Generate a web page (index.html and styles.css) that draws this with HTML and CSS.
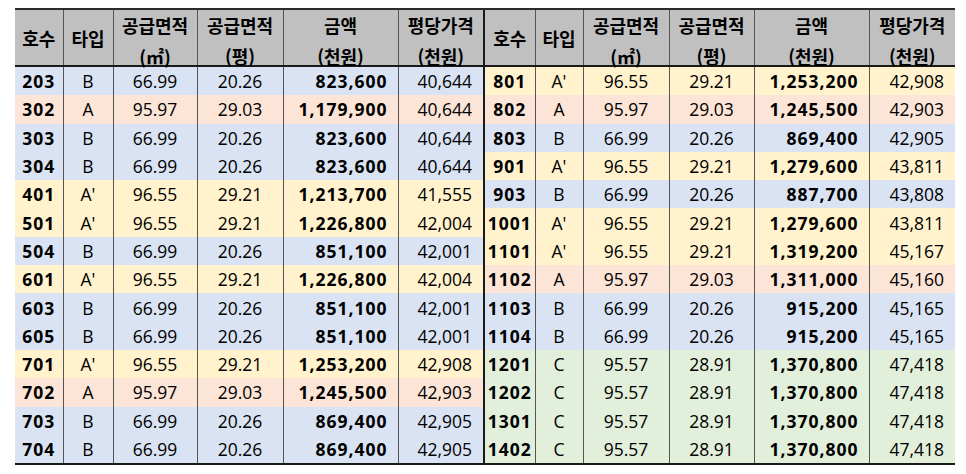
FILE: index.html
```html
<!DOCTYPE html>
<html lang="ko">
<head>
<meta charset="utf-8">
<title>분양가 표</title>
<link rel="stylesheet" href="styles.css">
</head>
<body>
<div class="sheet">
  <div class="half left">
    <table>
      <colgroup><col class="w48"><col class="w50"><col class="w84"><col class="w86"><col class="w115"><col class="w85"></colgroup>
      <thead><tr>
        <th><div class="hd one"><span>호수</span></div></th>
        <th><div class="hd one"><span>타입</span></div></th>
        <th><div class="hd"><span>공급면적</span><span>(㎡)</span></div></th>
        <th><div class="hd"><span>공급면적</span><span>(평)</span></div></th>
        <th><div class="hd"><span>금액</span><span>(천원)</span></div></th>
        <th><div class="hd"><span>평당가격</span><span>(천원)</span></div></th>
      </tr></thead>
      <tbody>
        <tr class="b"><td class="no">203</td><td>B</td><td>66.99</td><td>20.26</td><td class="amt">823,600</td><td class="pp">40,644</td></tr>
        <tr class="a"><td class="no">302</td><td>A</td><td>95.97</td><td>29.03</td><td class="amt">1,179,900</td><td class="pp">40,644</td></tr>
        <tr class="b"><td class="no">303</td><td>B</td><td>66.99</td><td>20.26</td><td class="amt">823,600</td><td class="pp">40,644</td></tr>
        <tr class="b"><td class="no">304</td><td>B</td><td>66.99</td><td>20.26</td><td class="amt">823,600</td><td class="pp">40,644</td></tr>
        <tr class="ap"><td class="no">401</td><td>A'</td><td>96.55</td><td>29.21</td><td class="amt">1,213,700</td><td class="pp">41,555</td></tr>
        <tr class="ap"><td class="no">501</td><td>A'</td><td>96.55</td><td>29.21</td><td class="amt">1,226,800</td><td class="pp">42,004</td></tr>
        <tr class="b"><td class="no">504</td><td>B</td><td>66.99</td><td>20.26</td><td class="amt">851,100</td><td class="pp">42,001</td></tr>
        <tr class="ap"><td class="no">601</td><td>A'</td><td>96.55</td><td>29.21</td><td class="amt">1,226,800</td><td class="pp">42,004</td></tr>
        <tr class="b"><td class="no">603</td><td>B</td><td>66.99</td><td>20.26</td><td class="amt">851,100</td><td class="pp">42,001</td></tr>
        <tr class="b"><td class="no">605</td><td>B</td><td>66.99</td><td>20.26</td><td class="amt">851,100</td><td class="pp">42,001</td></tr>
        <tr class="ap"><td class="no">701</td><td>A'</td><td>96.55</td><td>29.21</td><td class="amt">1,253,200</td><td class="pp">42,908</td></tr>
        <tr class="a"><td class="no">702</td><td>A</td><td>95.97</td><td>29.03</td><td class="amt">1,245,500</td><td class="pp">42,903</td></tr>
        <tr class="b"><td class="no">703</td><td>B</td><td>66.99</td><td>20.26</td><td class="amt">869,400</td><td class="pp">42,905</td></tr>
        <tr class="b"><td class="no">704</td><td>B</td><td>66.99</td><td>20.26</td><td class="amt">869,400</td><td class="pp">42,905</td></tr>
      </tbody>
    </table>
  </div>
  <div class="half right">
    <table>
      <colgroup><col class="w50"><col class="w48"><col class="w86"><col class="w85"><col class="w115"><col class="w86"></colgroup>
      <thead><tr>
        <th><div class="hd one"><span>호수</span></div></th>
        <th><div class="hd one"><span>타입</span></div></th>
        <th><div class="hd"><span>공급면적</span><span>(㎡)</span></div></th>
        <th><div class="hd"><span>공급면적</span><span>(평)</span></div></th>
        <th><div class="hd"><span>금액</span><span>(천원)</span></div></th>
        <th><div class="hd"><span>평당가격</span><span>(천원)</span></div></th>
      </tr></thead>
      <tbody>
        <tr class="ap"><td class="no">801</td><td>A'</td><td>96.55</td><td>29.21</td><td class="amt">1,253,200</td><td class="pp">42,908</td></tr>
        <tr class="a"><td class="no">802</td><td>A</td><td>95.97</td><td>29.03</td><td class="amt">1,245,500</td><td class="pp">42,903</td></tr>
        <tr class="b"><td class="no">803</td><td>B</td><td>66.99</td><td>20.26</td><td class="amt">869,400</td><td class="pp">42,905</td></tr>
        <tr class="ap"><td class="no">901</td><td>A'</td><td>96.55</td><td>29.21</td><td class="amt">1,279,600</td><td class="pp">43,811</td></tr>
        <tr class="b"><td class="no">903</td><td>B</td><td>66.99</td><td>20.26</td><td class="amt">887,700</td><td class="pp">43,808</td></tr>
        <tr class="ap"><td class="no">1001</td><td>A'</td><td>96.55</td><td>29.21</td><td class="amt">1,279,600</td><td class="pp">43,811</td></tr>
        <tr class="ap"><td class="no">1101</td><td>A'</td><td>96.55</td><td>29.21</td><td class="amt">1,319,200</td><td class="pp">45,167</td></tr>
        <tr class="a"><td class="no">1102</td><td>A</td><td>95.97</td><td>29.03</td><td class="amt">1,311,000</td><td class="pp">45,160</td></tr>
        <tr class="b"><td class="no">1103</td><td>B</td><td>66.99</td><td>20.26</td><td class="amt">915,200</td><td class="pp">45,165</td></tr>
        <tr class="b"><td class="no">1104</td><td>B</td><td>66.99</td><td>20.26</td><td class="amt">915,200</td><td class="pp">45,165</td></tr>
        <tr class="c"><td class="no">1201</td><td>C</td><td>95.57</td><td>28.91</td><td class="amt">1,370,800</td><td class="pp">47,418</td></tr>
        <tr class="c"><td class="no">1202</td><td>C</td><td>95.57</td><td>28.91</td><td class="amt">1,370,800</td><td class="pp">47,418</td></tr>
        <tr class="c"><td class="no">1301</td><td>C</td><td>95.57</td><td>28.91</td><td class="amt">1,370,800</td><td class="pp">47,418</td></tr>
        <tr class="c"><td class="no">1402</td><td>C</td><td>95.57</td><td>28.91</td><td class="amt">1,370,800</td><td class="pp">47,418</td></tr>
      </tbody>
    </table>
  </div>
</div>
</body>
</html>
```

FILE: styles.css
```css
body {
  margin: 0;
  background: #ffffff;
  color: #000000;
  font-family: "Open Sans", "Noto Sans CJK KR", sans-serif;
}

.sheet {
  display: flex;
  width: 940px;
  margin: 8px 0 0 15px;
  border-top: 2px solid #2b2b2b;
  border-bottom: 2px solid #1a1a1a;
}

.half.right {
  border-left: 2px solid #1a1a1a;
}

table {
  border-collapse: collapse;
  table-layout: fixed;
  border-spacing: 0;
}

.left table { width: 468px; }
.right table { width: 470px; }

.w48 { width: 48px; }
.w50 { width: 50px; }
.w84 { width: 84px; }
.w85 { width: 85px; }
.w86 { width: 86px; }
.w115 { width: 115px; }

th {
  background: #c0c0c0;
  height: 55px;
  padding: 0;
  border-bottom: 2px solid #1a1a1a;
  font-family: "Noto Sans CJK KR", "Open Sans", sans-serif;
  font-size: 18px;
  font-weight: 700;
  text-align: center;
  vertical-align: middle;
}

.hd {
  height: 55px;
  box-sizing: border-box;
  padding-top: 6px;
  display: flex;
  flex-direction: column;
  justify-content: center;
  align-items: center;
  gap: 6px;
  line-height: 25px;
  white-space: nowrap;
}

.hd.one {
  padding-top: 1px;
}

th + th,
td + td {
  border-left: 1px solid #555555;
}

td {
  height: 28.3px;
  padding: 0;
  font-size: 17.5px;
  line-height: 20px;
  text-align: center;
  vertical-align: middle;
  white-space: nowrap;
}

td.no {
  font-weight: 700;
  letter-spacing: 1px;
}

td.amt {
  font-weight: 700;
  letter-spacing: 1px;
  text-align: right;
  padding-right: 10px;
}

td.pp {
  text-align: right;
  padding-right: 11px;
}

tr.b { background: #dae3f3; }
tr.a { background: #fce4d6; }
tr.ap { background: #fff2cc; }
tr.c { background: #e2efda; }
```
